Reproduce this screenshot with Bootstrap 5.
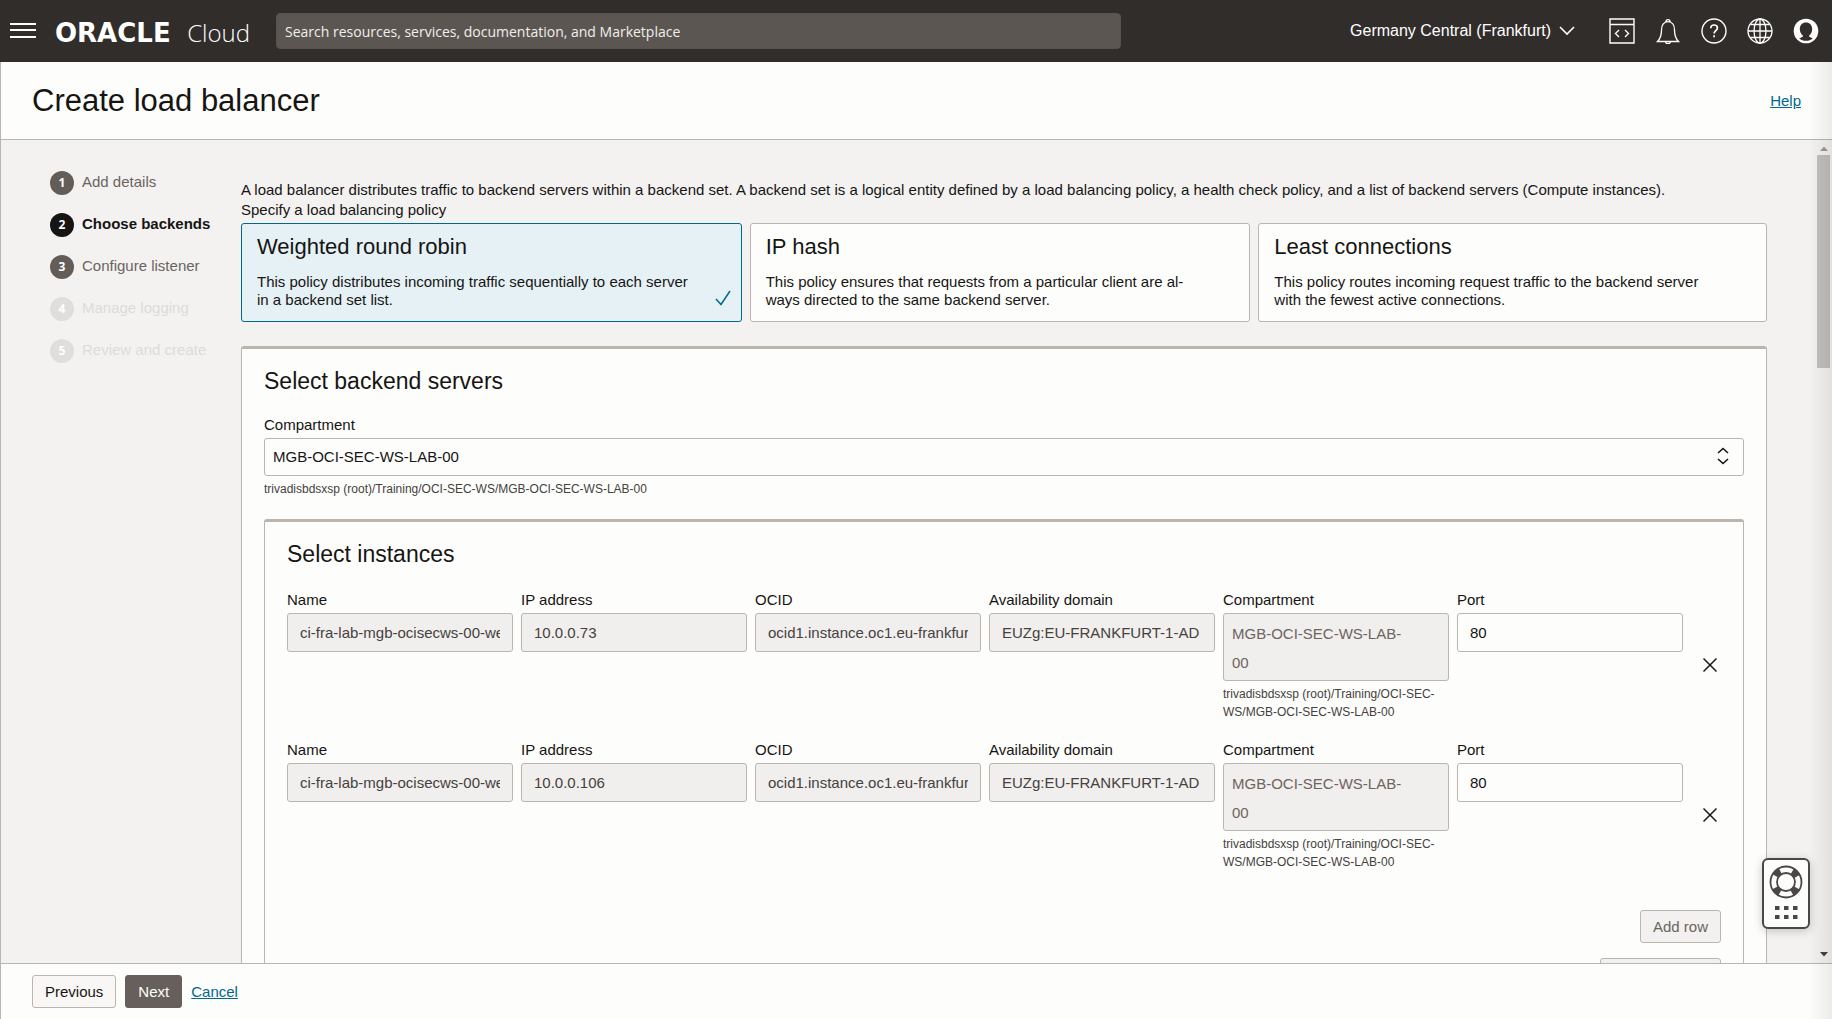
<!DOCTYPE html>
<html lang="en">
<head>
<meta charset="utf-8">
<meta name="viewport" content="width=device-width, initial-scale=1">
<title>Create load balancer</title>
<link href="https://cdn.jsdelivr.net/npm/bootstrap@5.3.0/dist/css/bootstrap.min.css" rel="stylesheet">
<style>
:root{--line:#bbb5b0;--ink:#161513;--muted:#6b645f;--paper:#fdfdfc;--canvas:#f3f2f1;--link:#00688c}
body{font-family:"Liberation Sans",Arial,sans-serif;font-size:15px;line-height:20px;color:var(--ink);background:var(--paper)}
a{color:var(--link)}
.topbar{height:62px;background:#312d2a;color:#fff;padding:0 13px 0 10px;flex:none}
.icon-btn{border:0;background:none;padding:0;color:inherit;display:flex}
.brand{color:#fff;text-decoration:none;width:195px;margin:4px 26px 0 19px;white-space:nowrap}
.brand-name{font:bold 26px/32px "DejaVu Sans",sans-serif}
.brand-sub{font:300 24px/32px "Open Sans",sans-serif}
.search-box{width:845px;height:36px;border:1px solid #57524e;border-radius:4px;background:#5b5652;color:#f1efed;padding:0 8px;font:14px/20px "Open Sans",sans-serif}
.search-box::placeholder{color:#f1efed;opacity:1}
.region{font-size:16px;gap:8px;margin-right:34px;align-items:center}
.tools{gap:20px}
.workspace{border-left:1px solid var(--line);min-height:0}
.workspace::after{content:"";position:absolute;inset:0 0 0 auto;width:24px;background:linear-gradient(90deg,rgba(0,0,0,0),rgba(0,0,0,.07));pointer-events:none}
.page-head{height:78px;border-bottom:1px solid var(--line);padding:0 31px;flex:none}
.page-head h1{font-size:31px;line-height:36px;font-weight:400}
.scroll-area{background:var(--canvas);min-height:0}
.steps{width:240px;padding:31px 0 0 49px;flex:none}
.step{height:42px;gap:8px;color:var(--muted);text-decoration:none;align-items:flex-start}
.step-label{line-height:22px}
.step-num{width:24px;height:24px;border-radius:50%;background:#645c57;color:#fff;font:bold 12px/24px "Open Sans",sans-serif;text-align:center}
.step.current{color:var(--ink);font-weight:700}
.step.current .step-num{background:#161513}
.step.off{color:#dddbd9}
.step.off .step-num{background:#dfdedc}
.content-col{padding:40px 50px 0 0;min-width:0}
.lead-in{margin:0 0 3px}
.policy{border:1px solid var(--line);border-radius:3px;background:var(--paper);padding:11px 30px 0 15px;height:99px;cursor:pointer}
.policy.chosen{background:#e5f1f5;border-color:#00688c}
.policy-title{font-size:22px;line-height:24px;margin-bottom:14px;display:block}
.policy-text{line-height:18px;display:block;max-width:446px}
.policy-check{position:absolute;right:10px;bottom:15px}
.panel{border:1px solid var(--line);border-top-width:3px;border-radius:3px;background:var(--paper);padding:19px 22px 0}
.panel h2{font-size:23px;line-height:26px;font-weight:400;margin:0 0 21px}
.panel .panel{margin-top:21px}
.panel .panel h2{margin-bottom:23px}
.field-label{display:block;line-height:20px;margin-bottom:3px}
.hint{font-size:12px;line-height:18px;color:#45413d;margin:4px 0 0}
.form-select.pick{height:38px;border:1px solid var(--line);border-radius:3px;background:none;color:var(--ink);font-size:15px;padding:0 8px;line-height:20px}
.pick-arrows{position:absolute;right:14px;top:9px;pointer-events:none}
.cell{padding-right:8px;flex:0 1 234px;min-width:0}
.form-control.box{height:39px;border:1px solid var(--line);border-radius:3px;background:var(--paper);color:var(--ink);font-size:15px;line-height:20px;padding:0 12px}
.form-control.box:disabled{background:#f1efed;color:#45413d}
textarea.form-control.box{height:68px;line-height:29px;padding:5px 36px 3px 8px;resize:none;overflow:hidden}
textarea.form-control.box:disabled{color:var(--muted)}
.instance-row{height:150px}
.remove{margin:58px 4px 0 auto}
.flat{border:1px solid var(--line);border-radius:3px;background:#f8f7f6;color:var(--ink);font-size:15px;line-height:20px;padding:5px 12px;height:33px}
.flat:disabled{color:var(--muted);background:#f3f1ef;border-color:var(--line);opacity:1}
.flat.solid{background:#665f5b;border-color:#665f5b;color:#fff}
.row-actions{gap:15px;padding:20px 0 16px}
.scroller{width:15px;flex:none;padding:6px 2px 6px 0;gap:4px;align-items:center}
.thumb{width:13px;height:213px;background:#bfbfbf}
.page-foot{height:56px;border-top:1px solid var(--line);padding:0 31px;gap:9px;flex:none}
.support{position:absolute;right:22px;bottom:90px;width:48px;height:71px;border:2px solid #4a4745;border-radius:6px;background:var(--paper);box-shadow:0 2px 10px rgba(0,0,0,.2);padding:0;z-index:2}
</style>
</head>
<body>
<div class="d-flex flex-column vh-100 overflow-hidden">
<header class="topbar d-flex align-items-center">
  <button class="icon-btn" type="button" aria-label="Menu"><svg width="26" height="18" stroke="#fff" stroke-width="2"><path d="M0 2h26M0 8h26M0 15h26"/></svg></button>
  <a class="brand d-flex justify-content-between" href="#"><span class="brand-name">ORACLE</span><span class="brand-sub">Cloud</span></a>
  <input class="search-box" type="search" placeholder="Search resources, services, documentation, and Marketplace" aria-label="Search">
  <button class="icon-btn region ms-auto" type="button">Germany Central (Frankfurt)
    <svg width="16" height="10" fill="none" stroke="#fff" stroke-width="1.6"><path d="M1 1l7 7 7-7"/></svg></button>
  <div class="tools d-flex align-items-center">
    <button class="icon-btn" type="button" aria-label="Developer tools"><svg width="26" height="26" fill="none" stroke="#fff" stroke-width="1.4"><path d="M1 1h24v24H1zM1 6.500h24M10 12l-3.500 3.500L10 19M16 12l3.500 3.500L16 19"/></svg></button>
    <button class="icon-btn" type="button" aria-label="Notifications"><svg width="26" height="26" fill="none" stroke="#fff" stroke-width="1.300"><path d="M2.500 23.500C5 21 6.500 17 6.500 12c0-5 2.500-8.300 6.500-8.300s6.500 3.300 6.500 8.300c0 5 1.500 9 4 11.500zM11 3.700a2 2 0 1 1 4 0M10.500 23.500a2.500 2.200 0 0 0 5 0"/></svg></button>
    <button class="icon-btn" type="button" aria-label="Help"><svg width="26" height="26" fill="none" stroke="#fff" stroke-width="1.400"><circle cx="13" cy="13" r="12"/><path stroke-width="1.700" d="M9.700 10.200c.1-2 1.400-3.200 3.400-3.200 1.900 0 3.300 1.100 3.300 2.900 0 2.600-3.300 2.700-3.300 5.600M13.100 17.300v2"/></svg></button>
    <button class="icon-btn" type="button" aria-label="Language"><svg width="26" height="26" fill="none" stroke="#fff" stroke-width="1.300"><circle cx="13" cy="13" r="12"/><ellipse cx="13" cy="13" rx="6" ry="12"/><path d="M13 1v24M1 13h24M3.500 6.500h19M3.500 19.500h19"/></svg></button>
    <button class="icon-btn" type="button" aria-label="Profile"><svg width="26" height="26"><circle cx="13" cy="13" r="12.300" fill="#fff"/><path fill="#312d2a" d="M13 4.500c3.700 0 6.200 2.700 6.200 6.600 0 2.700-1.200 5-3 6.300v1.300l3.600 1.700c-2 1.500-4.200 2.300-6.800 2.300s-4.800-.8-6.800-2.300l3.600-1.700v-1.300c-1.800-1.300-3-3.600-3-6.300 0-3.900 2.500-6.600 6.200-6.600z"/></svg></button>
  </div>
</header>
<div class="workspace position-relative d-flex flex-column flex-grow-1">
  <div class="page-head d-flex align-items-center justify-content-between">
    <h1 class="m-0">Create load balancer</h1><a href="#">Help</a>
  </div>
  <div class="scroll-area d-flex flex-grow-1 overflow-hidden">
    <nav class="steps" aria-label="Steps">
      <a class="step d-flex" href="#"><span class="step-num">1</span><span class="step-label">Add details</span></a>
      <a class="step d-flex current" href="#"><span class="step-num">2</span><span class="step-label">Choose backends</span></a>
      <a class="step d-flex" href="#"><span class="step-num">3</span><span class="step-label">Configure listener</span></a>
      <a class="step d-flex off" href="#"><span class="step-num">4</span><span class="step-label">Manage logging</span></a>
      <a class="step d-flex off" href="#"><span class="step-num">5</span><span class="step-label">Review and create</span></a>
    </nav>
    <main class="content-col flex-grow-1">
      <p class="m-0">A load balancer distributes traffic to backend servers within a backend set. A backend set is a logical entity defined by a load balancing policy, a health check policy, and a list of backend servers (Compute instances).</p>
      <p class="lead-in">Specify a load balancing policy</p>
      <div class="row g-0 mb-4">
        <div class="col-4 pe-2"><label class="policy chosen d-block position-relative"><input class="visually-hidden" type="radio" name="policy" checked>
          <span class="policy-title">Weighted round robin</span><span class="policy-text">This policy distributes incoming traffic sequentially to each server in a backend set list.</span>
          <svg class="policy-check" width="16" height="16" fill="none" stroke="#00688c" stroke-width="1.500"><path d="M1 9l5 5.500L15 1"/></svg></label></div>
        <div class="col-4 pe-2"><label class="policy d-block position-relative"><input class="visually-hidden" type="radio" name="policy">
          <span class="policy-title">IP hash</span><span class="policy-text">This policy ensures that requests from a particular client are al&shy;ways directed to the same backend server.</span></label></div>
        <div class="col-4"><label class="policy d-block position-relative"><input class="visually-hidden" type="radio" name="policy">
          <span class="policy-title">Least connections</span><span class="policy-text">This policy routes incoming request traffic to the backend server with the fewest active connections.</span></label></div>
      </div>
      <section class="panel">
        <h2>Select backend servers</h2>
        <label class="field-label" for="comp">Compartment</label>
        <div class="position-relative">
          <select class="form-select pick" id="comp"><option>MGB-OCI-SEC-WS-LAB-00</option></select>
          <svg class="pick-arrows" width="14" height="18" fill="none" stroke="#161513" stroke-width="1.600"><path d="M2 6l5-4.500L12 6M2 12l5 4.500L12 12"/></svg>
        </div>
        <p class="hint">trivadisbdsxsp (root)/Training/OCI-SEC-WS/MGB-OCI-SEC-WS-LAB-00</p>
        <section class="panel">
          <h2>Select instances</h2>
          <div class="instance-row d-flex">
            <div class="cell"><label class="field-label" for="n1">Name</label><input id="n1" class="form-control box" value="ci-fra-lab-mgb-ocisecws-00-web-01" disabled></div>
            <div class="cell"><label class="field-label" for="i1">IP address</label><input id="i1" class="form-control box" value="10.0.0.73" disabled></div>
            <div class="cell"><label class="field-label" for="o1">OCID</label><input id="o1" class="form-control box" value="ocid1.instance.oc1.eu-frankfurt-1" disabled></div>
            <div class="cell"><label class="field-label" for="a1">Availability domain</label><input id="a1" class="form-control box" value="EUZg:EU-FRANKFURT-1-AD" disabled></div>
            <div class="cell"><label class="field-label" for="c1">Compartment</label><textarea id="c1" class="form-control box" rows="2" disabled>MGB-OCI-SEC-WS-LAB-00</textarea><p class="hint">trivadisbdsxsp (root)/Training/OCI-SEC-<wbr>WS/MGB-OCI-SEC-WS-LAB-00</p></div>
            <div class="cell"><label class="field-label" for="p1">Port</label><input id="p1" class="form-control box" value="80"></div>
            <button class="icon-btn remove align-self-start" type="button" aria-label="Remove row"><svg width="14" height="34" fill="none" stroke="#161513" stroke-width="1.500"><path d="M.5 10.500l13 13M13.500 10.500l-13 13"/></svg></button>
          </div>
          <div class="instance-row d-flex">
            <div class="cell"><label class="field-label" for="n2">Name</label><input id="n2" class="form-control box" value="ci-fra-lab-mgb-ocisecws-00-web-02" disabled></div>
            <div class="cell"><label class="field-label" for="i2">IP address</label><input id="i2" class="form-control box" value="10.0.0.106" disabled></div>
            <div class="cell"><label class="field-label" for="o2">OCID</label><input id="o2" class="form-control box" value="ocid1.instance.oc1.eu-frankfurt-1" disabled></div>
            <div class="cell"><label class="field-label" for="a2">Availability domain</label><input id="a2" class="form-control box" value="EUZg:EU-FRANKFURT-1-AD" disabled></div>
            <div class="cell"><label class="field-label" for="c2">Compartment</label><textarea id="c2" class="form-control box" rows="2" disabled>MGB-OCI-SEC-WS-LAB-00</textarea><p class="hint">trivadisbdsxsp (root)/Training/OCI-SEC-<wbr>WS/MGB-OCI-SEC-WS-LAB-00</p></div>
            <div class="cell"><label class="field-label" for="p2">Port</label><input id="p2" class="form-control box" value="80"></div>
            <button class="icon-btn remove align-self-start" type="button" aria-label="Remove row"><svg width="14" height="34" fill="none" stroke="#161513" stroke-width="1.500"><path d="M.5 10.500l13 13M13.500 10.500l-13 13"/></svg></button>
          </div>
          <div class="row-actions d-flex flex-column align-items-end">
            <button class="btn flat" type="button" disabled>Add row</button>
            <button class="btn flat" type="button" disabled>Add backends</button>
          </div>
        </section>
      </section>
    </main>
    <div class="scroller d-flex flex-column" aria-hidden="true">
      <svg width="8" height="5"><path d="M0 5l4-4.500L8 5z" fill="#9a9a9a"/></svg>
      <div class="thumb"></div>
      <svg class="mt-auto" width="8" height="5"><path d="M0 0h8L4 4.500z" fill="#45413d"/></svg>
    </div>
  </div>
  <footer class="page-foot d-flex align-items-center">
    <button class="btn flat" type="button">Previous</button>
    <button class="btn flat solid" type="button">Next</button>
    <a href="#">Cancel</a>
  </footer>
  <button class="support" type="button" aria-label="Support">
    <svg width="44" height="67" fill="none" stroke="#4a4745"><g transform="translate(22 22)"><circle r="12.500" stroke-width="7" stroke-dasharray="7 12.635" transform="rotate(29)"/><circle r="15.500" stroke-width="1.800"/><circle r="9" stroke-width="1.800"/></g><path stroke-width="4" d="M11 48h4.500m4.500 0h4.500m4.500 0h4.500M11 57h4.500m4.500 0h4.500m4.500 0h4.500"/></svg>
  </button>
</div>
</div>
<script src="https://cdn.jsdelivr.net/npm/bootstrap@5.3.0/dist/js/bootstrap.bundle.min.js"></script>
</body>
</html>
